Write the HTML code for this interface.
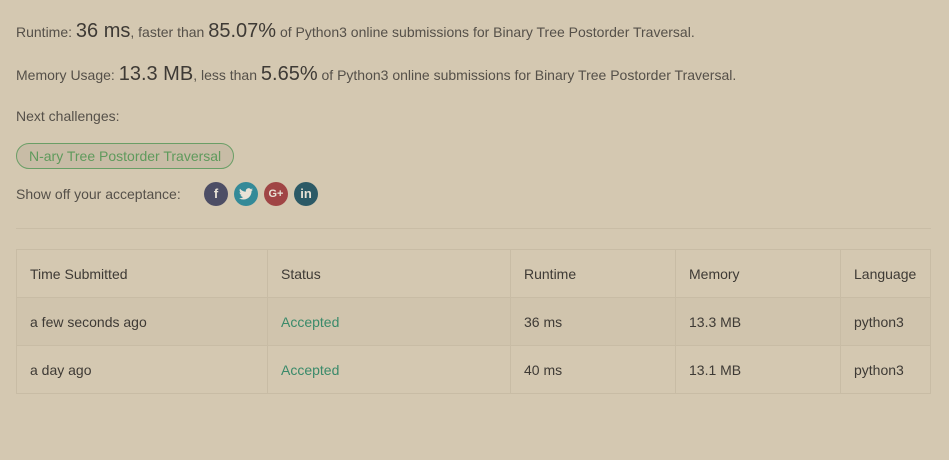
<!DOCTYPE html>
<html><head><meta charset="utf-8"><style>
body{margin:0;background:#d4c8b1;font-family:"Liberation Sans",sans-serif;color:#555049;width:949px;height:460px;overflow:hidden}
.l{position:absolute;left:16px;font-size:14px;white-space:nowrap}
.big{font-size:20px;color:#3e3a35}
.pill{position:absolute;left:16px;top:143px;height:26px;box-sizing:border-box;border:1px solid #6a9e66;border-radius:14px;padding:0 12px;line-height:25px;font-size:14px;color:#5f9a5c;background:#c8bca6}
.ic{position:absolute;top:182px;width:24px;height:24px;border-radius:50%;color:#e8e2d6;font-size:13px;font-weight:bold;text-align:center;line-height:24px}
hr{position:absolute;left:16px;top:228px;width:915px;margin:0;border:0;border-top:1px solid #c9bda6}
table{position:absolute;left:16px;top:249px;border-collapse:collapse;font-size:14px;color:#3e3a35}
td{border:1px solid #c8bca5;height:48px;padding:0 13px;box-sizing:border-box}
tr.a td{background:#d0c4ad}
.g{color:#3a8a6a}
</style></head><body>
<div class="l" style="top:20px">Runtime: <span class="big">36 ms</span>, faster than <span class="big">85.07%</span> of Python3 online submissions for Binary Tree Postorder Traversal.</div>
<div class="l" style="top:63px">Memory Usage: <span class="big">13.3 MB</span>, less than <span class="big">5.65%</span> of Python3 online submissions for Binary Tree Postorder Traversal.</div>
<div class="l" style="top:108px">Next challenges:</div>
<div class="pill">N-ary Tree Postorder Traversal</div>
<div class="l" style="top:186px">Show off your acceptance:</div>
<div class="ic" style="left:204px;background:#4d4e65">f</div>
<div class="ic" style="left:234px;background:#348a98"><svg width="14" height="12" viewBox="0 0 24 20" style="margin-top:6px"><path fill="#e8e2d6" d="M24 2.4a10 10 0 0 1-2.8.8A5 5 0 0 0 23.3.4a10 10 0 0 1-3.1 1.2A4.9 4.9 0 0 0 11.8 6 14 14 0 0 1 1.7.9a4.9 4.9 0 0 0 1.5 6.6A4.9 4.9 0 0 1 1 6.9a4.9 4.9 0 0 0 3.9 4.8 4.9 4.9 0 0 1-2.200.1 4.9 4.9 0 0 0 4.6 3.4A9.9 9.9 0 0 1 0 17.3 14 14 0 0 0 7.5 19.5c9 0 14-7.500 14-14v-.6A10 10 0 0 0 24 2.4z"/></svg></div>
<div class="ic" style="left:264px;background:#a04545;font-size:11px">G+</div>
<div class="ic" style="left:294px;background:#2c5a66">in</div>
<hr>
<table>
<tr><td style="width:251px">Time Submitted</td><td style="width:243px">Status</td><td style="width:165px">Runtime</td><td style="width:165px">Memory</td><td style="width:90px">Language</td></tr>
<tr class="a"><td>a few seconds ago</td><td class="g">Accepted</td><td>36 ms</td><td>13.3 MB</td><td>python3</td></tr>
<tr><td>a day ago</td><td class="g">Accepted</td><td>40 ms</td><td>13.1 MB</td><td>python3</td></tr>
</table>
</body></html>
